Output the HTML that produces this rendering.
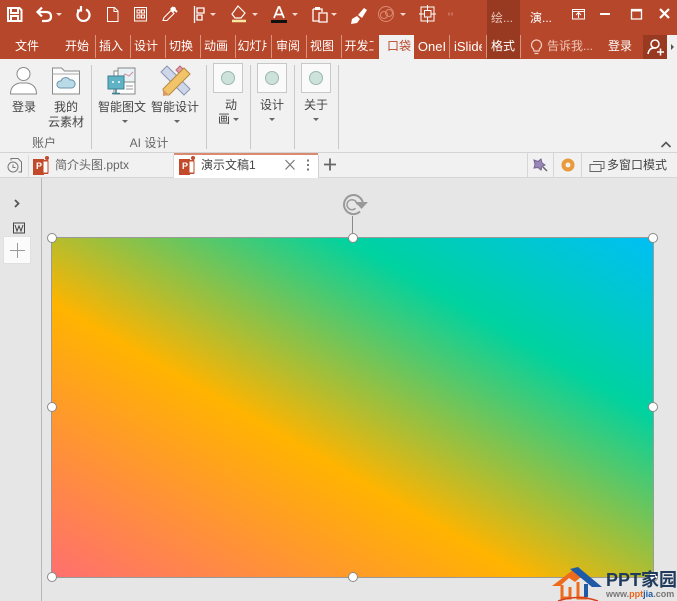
<!DOCTYPE html>
<html><head><meta charset="utf-8">
<style>
html,body{margin:0;padding:0;width:677px;height:601px;overflow:hidden;background:#e6e6e6}
body{position:relative;font-family:"Liberation Sans","Noto Sans CJK SC",sans-serif;font-size:12px;color:#444}
.a{position:absolute}
.t{position:absolute;white-space:nowrap;line-height:16px}
.c{transform:translateX(-50%);text-align:center}
.w{color:#fff}
.tab{position:absolute;top:38px;height:17px;line-height:17px;color:#fff;font-size:12px;white-space:nowrap;overflow:hidden;text-align:center;transform:translateX(-50%)}
.sep{position:absolute;top:35px;width:1px;height:23px;background:#d9937f}
.gs{position:absolute;top:65px;width:1px;height:84px;background:#c8c8c8}
.ph{position:absolute;top:63px;width:30px;height:30px;background:#fafafa;border:1px solid #c8c8c8;box-sizing:border-box}
.ph i{position:absolute;left:7px;top:7px;width:14px;height:14px;border-radius:50%;background:#cde2da;border:1px solid #9db8ae;box-sizing:border-box}
.ar{position:absolute;width:0;height:0;border-left:3px solid transparent;border-right:3px solid transparent;border-top:3px solid #666}
.wa{border-top-color:#f3d9d0}
.h{position:absolute;width:10px;height:10px;border-radius:50%;background:#fff;border:1.500px solid #8a8a8a;box-sizing:border-box;margin:-5px 0 0 -5px}
svg{position:absolute;overflow:visible}
</style></head><body>

<!-- title + tabs -->
<div class="a" style="left:0;top:0;width:677px;height:59px;background:#b7472a"></div>
<div class="a" style="left:487px;top:0;width:33px;height:59px;background:#983a22"></div>

<!-- QAT icons -->
<svg style="left:0;top:0" width="480" height="30" fill="none" stroke="#fff" stroke-width="2">
<path d="M8 8h11.500l2 2v11h-13.500z M11 8v5h7v-5 M11 21v-5h7v5"/>
<path d="M38 12h8q5 0 5 4.500t-5 4.500h-4 M42 7.500l-4.500 4.500 4.500 4.500" stroke-width="2.200"/>
<path d="M81 9.500a6 6 0 1 0 5 0 M81 6v4.500h-4" stroke-width="2.200"/>
<path d="M107.500 7.500h7l3.500 3.500v10.500h-10.500z M114 7.500v4h4" stroke-width="1"/>
<path d="M134.500 7.500h12v13.500h-12z M137 10h3v3h-3z M141.500 10h3v3h-3z M137 15h3v3h-3z M141.500 15h3v3h-3z" stroke-width="1"/>
<path d="M163 20.500l1 -3 7-7 3 3-7 7z" stroke-width="1.100"/><path d="M170 9l2-2 3 0 1 2-1 2-2 1z" fill="#fff" stroke="none"/><path d="M172 7l5 5" stroke-width="2"/>
<path d="M194.500 6v17 M197 8h7v5h-7z M197 15h5v5h-5z" stroke-width="1.300"/>
<path d="M238 6l7 7-4 5h-6l-3-4z" stroke-width="1.200"/><path d="M232 21h14" stroke="#f7e9a0" stroke-width="2.500"/>
<path d="M274 18l4.500-11h1l4.500 11 M276 14.500h6" stroke-width="1.700"/>
<path d="M271 21.500h16" stroke="#111" stroke-width="3"/>
<path d="M313 9h9v3 M313 9v12h6 M319 13h8v9h-8z" stroke-width="1.300"/><path d="M315 7h5v3h-5z" fill="#fff" stroke="none"/>
<path d="M352 19l5-3 3 3-3 4-6 1z" fill="#fff" stroke="none"/><path d="M358 15l6-7 3 2-5 8z" fill="#fff" stroke="none"/>
<g stroke="#d98a72" stroke-width="1"><circle cx="386" cy="14" r="7.500"/><circle cx="384" cy="15" r="3.500"/><circle cx="389" cy="13" r="3.500"/></g>
<g stroke-width="1"><path d="M421 7h13v14h-13z M424.500 10.500h6.500v6.500h-6.500z"/><path d="M427.500 5v5 M427.500 17v6 M419 14h5.500 M431 14h5"/></g>
<path d="M449 12.500v3 M452 12.500v3" stroke="#d07a62" stroke-width="1.500"/>
</svg>
<div class="ar wa" style="left:56px;top:13px"></div>
<div class="ar wa" style="left:210px;top:13px"></div>
<div class="ar wa" style="left:252px;top:13px"></div>
<div class="ar wa" style="left:292px;top:13px"></div>
<div class="ar wa" style="left:331px;top:13px"></div>
<div class="ar wa" style="left:400px;top:13px"></div>

<div class="t" style="left:491px;top:10px;color:#e8c4b8">绘...</div>
<div class="t w" style="left:530px;top:10px">演...</div>
<svg style="left:570px;top:0" width="107" height="30" fill="none" stroke="#fff">
<path d="M2.500 9.500h12v9.500h-12z M2.500 11.500h12 M8.500 18v-5 M6 15l2.500-2.500 2.500 2.500" stroke-width="1"/>
<path d="M30 14h10" stroke-width="2"/>
<path d="M61.500 9.500h10v9.500h-10z" stroke-width="1.300"/><path d="M61 10.500h11" stroke-width="2"/>
<path d="M90 9l9 9 M99 9l-9 9" stroke-width="2.200"/>
</svg>

<!-- tabs -->
<div class="tab" style="left:27px">文件</div>
<div class="tab" style="left:77px">开始</div>
<div class="sep" style="left:95px"></div>
<div class="tab" style="left:111px">插入</div>
<div class="sep" style="left:130px"></div>
<div class="tab" style="left:146px">设计</div>
<div class="sep" style="left:165px"></div>
<div class="tab" style="left:181px">切换</div>
<div class="sep" style="left:200px"></div>
<div class="tab" style="left:216px">动画</div>
<div class="sep" style="left:235px"></div>
<div class="tab" style="left:252px;width:29px">幻灯片</div>
<div class="sep" style="left:271px"></div>
<div class="tab" style="left:288px">审阅</div>
<div class="sep" style="left:306px"></div>
<div class="tab" style="left:322px">视图</div>
<div class="sep" style="left:341px"></div>
<div class="tab" style="left:359px;width:29px">开发工</div>
<div class="a" style="left:379px;top:35px;width:35px;height:24px;background:#f1f1f1"></div>
<div class="tab" style="left:399px;color:#b7472a">口袋</div>
<div class="tab" style="left:432px;width:29px;font-size:13px">OneI</div>
<div class="sep" style="left:449px"></div>
<div class="tab" style="left:468px;width:28px;font-size:13px">iSlide</div>
<div class="sep" style="left:486px"></div>
<div class="tab" style="left:503px">格式</div>
<div class="sep" style="left:520px"></div>
<svg style="left:530px;top:38px" width="14" height="18" fill="none" stroke="#f1cdbf" stroke-width="1.200"><path d="M3.500 11a5 5 0 1 1 6 0l-.5 2h-5z M4.500 15.500h4"/></svg>
<div class="tab" style="left:570px;color:#eec6b8">告诉我...</div>
<div class="tab" style="left:620px">登录</div>
<div class="a" style="left:643px;top:35px;width:24px;height:24px;background:#983a22"></div>
<svg style="left:646px;top:38px" width="20" height="20" fill="none" stroke="#fff" stroke-width="1.500"><circle cx="9" cy="6" r="4"/><path d="M2 16q1-6 6-6h2 M11 14h7 M14.500 10.500v7"/></svg>
<div class="a" style="left:667px;top:35px;width:10px;height:24px;background:#f1f1f1"></div>
<div class="a" style="left:671px;top:44px;width:0;height:0;border-top:3px solid transparent;border-bottom:3px solid transparent;border-left:3px solid #555"></div>

<!-- ribbon -->
<div class="a" style="left:0;top:59px;width:677px;height:94px;background:#f1f1f1;border-bottom:1px solid #d4d4d4;box-sizing:border-box"></div>
<div class="gs" style="left:91px"></div>
<div class="gs" style="left:206px"></div>
<div class="gs" style="left:250px"></div>
<div class="gs" style="left:294px"></div>
<div class="gs" style="left:338px"></div>

<svg style="left:0;top:59px" width="210" height="50" fill="none">
<circle cx="23.500" cy="15" r="6.500" stroke="#8a8a8a" fill="#fff"/>
<path d="M10.500 35q0-9 9-11h8q9 2 9 11z" stroke="#8a8a8a" fill="#fff"/>
<path d="M52.500 35v-26h9l3 3h15v23z" stroke="#8a8a8a" fill="#fcfcfc"/>
<path d="M52.500 15h27" stroke="#aaa"/>
<path d="M60 29a3.500 3.500 0 0 1 1-7 5 5 0 0 1 9-1 4 4 0 0 1 2 8z" fill="#b9dbe8" stroke="#6f93a8"/>
<path d="M114 12h21v23h-21z" fill="#fff" stroke="#888"/>
<path d="M118 9h17v14h-17z" fill="#e8f1f4" stroke="#888"/>
<path d="M121 20l4-5 4 2 4-4" stroke="#d58aa0"/><path d="M126 27h7M126 30h7" stroke="#999"/>
<path d="M108 17h16v13h-16z" fill="#5fb3c4" stroke="#3c7f90"/>
<path d="M116 30v4M112 34.500h8" stroke="#3c7f90" stroke-width="1.500"/>
<circle cx="113" cy="23" r="1" fill="#fff"/><circle cx="119" cy="23" r="1" fill="#fff"/>
<path d="M161 13l6-6 23 23-6 6z" fill="#cdd6ea" stroke="#8a97b0"/>
<path d="M180 7l6 6-4 4-6-6z" fill="#e99aa8" stroke="#b7697a"/>
<path d="M164 36l-1-6 21-21 6 6-21 21z" fill="#f2c46a" stroke="#b5873a"/>
<path d="M163 30l6 6-6 1z" fill="#d89a66"/>
</svg>

<div class="t c" style="left:24px;top:99px">登录</div>
<div class="t c" style="left:66px;top:99px">我的</div>
<div class="t c" style="left:66px;top:114px">云素材</div>
<div class="t c" style="left:122px;top:99px">智能图文</div>
<div class="t c" style="left:175px;top:99px">智能设计</div>
<div class="ar" style="left:122px;top:120px"></div>
<div class="ar" style="left:174px;top:120px"></div>
<div class="t c" style="left:44px;top:135px;color:#666">账户</div>
<div class="t c" style="left:149px;top:135px;color:#666">AI 设计</div>

<div class="ph" style="left:213px"><i></i></div>
<div class="ph" style="left:257px"><i></i></div>
<div class="ph" style="left:301px"><i></i></div>
<div class="t c" style="left:231px;top:97px">动</div>
<div class="t c" style="left:224px;top:111px">画</div>
<div class="ar" style="left:233px;top:118px"></div>
<div class="t c" style="left:272px;top:97px">设计</div>
<div class="ar" style="left:269px;top:118px"></div>
<div class="t c" style="left:316px;top:97px">关于</div>
<div class="ar" style="left:313px;top:118px"></div>
<svg style="left:660px;top:140px" width="12" height="9" fill="none" stroke="#555" stroke-width="1.600"><path d="M1.500 7l4.500-4.500 4.500 4.500"/></svg>

<!-- doc tabs -->
<div class="a" style="left:0;top:153px;width:677px;height:25px;background:#f1f1f1;border-bottom:1px solid #d6d6d6;box-sizing:border-box"></div>
<div class="a" style="left:174px;top:153px;width:144px;height:25px;background:#fff;border-top:2px solid #d98a6f;box-sizing:border-box"></div>
<div class="a" style="left:28px;top:155px;width:1px;height:22px;background:#dcdcdc"></div>
<div class="a" style="left:173px;top:155px;width:1px;height:22px;background:#dcdcdc"></div>
<div class="a" style="left:318px;top:155px;width:1px;height:22px;background:#d0d0d0"></div>
<div class="a" style="left:527px;top:153px;width:1px;height:25px;background:#d6d6d6"></div>
<div class="a" style="left:553px;top:153px;width:1px;height:25px;background:#d6d6d6"></div>
<div class="a" style="left:581px;top:153px;width:1px;height:25px;background:#d6d6d6"></div>
<svg style="left:0;top:153px" width="677" height="25" fill="none">
<circle cx="13" cy="14" r="5" stroke="#777"/><path d="M13 11.500v3h2.500" stroke="#777"/>
<path d="M11 7.500v-2h7l3.500 3.500v10h-3" stroke="#777"/>
<path d="M33 6h11v1h4v14h-4v1h-11z" fill="#c2492a"/><path d="M43 8h5v12h-5z" fill="#fff" stroke="#c2492a"/><circle cx="47" cy="5" r="2" fill="#c2492a"/>
<path d="M179 6h11v1h4v14h-4v1h-11z" fill="#c2492a"/><path d="M189 8h5v12h-5z" fill="#fff" stroke="#c2492a"/><circle cx="193" cy="5" r="2" fill="#c2492a"/>
<path d="M285.500 7l9 9.500 M294.500 7l-9 9.500" stroke="#777" stroke-width="1.200"/>
<path d="M308 6.500v2 M308 11v2 M308 15.500v2" stroke="#555" stroke-width="1.600"/>
<path d="M324 11.500h12 M330 5.500v12" stroke="#666" stroke-width="1.800"/>
<path d="M534 7l4 1.500 3-2.500 1 4 3 2-3 1.500-1 3.500-3-2.500-4 .5 1-3.500z" fill="#9a87b8" stroke="#75638f"/><path d="M543 14l4 4" stroke="#666" stroke-width="1.500"/>
<circle cx="568" cy="12" r="4.500" stroke="#e89a3c" stroke-width="4"/>
<path d="M593 8.500h11v7h-3 M590 11.500h11v7h-11z" stroke="#666"/>
</svg>
<div class="a" style="left:36px;top:161px;font-size:9px;line-height:11px;color:#fff;font-weight:bold">P</div>
<div class="a" style="left:182px;top:161px;font-size:9px;line-height:11px;color:#fff;font-weight:bold">P</div>
<div class="t" style="left:55px;top:157px;color:#666">简介头图.pptx</div>
<div class="t" style="left:201px;top:157px;color:#444">演示文稿1</div>
<div class="t" style="left:607px;top:157px;color:#444">多窗口模式</div>

<!-- left pane -->
<div class="a" style="left:41px;top:178px;width:1px;height:423px;background:#b8b8b8"></div>
<svg style="left:0;top:178px" width="41" height="80" fill="none">
<path d="M15 22l3.500 3.500-3.500 3.500" stroke="#555" stroke-width="1.800"/>
<path d="M13.500 45h11v10h-11z" stroke="#444" stroke-width="1"/><path d="M15 47l2 6 2-5 2 5 2-6" stroke="#444" stroke-width="1"/>
</svg>
<div class="a" style="left:3px;top:236px;width:28px;height:28px;background:#fbfbfb;border:1px solid #e0e0e0;box-sizing:border-box"></div>
<svg style="left:3px;top:236px" width="28" height="28" fill="none" stroke="#999"><path d="M7 14.500h15 M14.500 7v15"/></svg>

<!-- slide -->
<div class="a" style="left:52px;top:238px;width:601px;height:339px;background:linear-gradient(30deg,#ff6f6f 0%,#ffb400 40%,#00d2a0 74%,#00bff5 100%);box-shadow:0 0 0 1px #9a9a9a"></div>
<svg style="left:340px;top:192px" width="30" height="47" fill="none">
<path d="M12.500 24v22" stroke="#8a8a8a"/>
<path d="M23 12.500a9.500 9.500 0 1 0-3 7" stroke="#999" stroke-width="2"/>
<path d="M17 12.500a5 5 0 1 0-1.500 3.800" stroke="#999" stroke-width="1.500"/>
<path d="M15 10h13l-6.500 7z" fill="#999"/>
</svg>
<div class="h" style="left:52px;top:238px"></div>
<div class="h" style="left:352.500px;top:238px"></div>
<div class="h" style="left:653px;top:238px"></div>
<div class="h" style="left:52px;top:407px"></div>
<div class="h" style="left:653px;top:407px"></div>
<div class="h" style="left:52px;top:577px"></div>
<div class="h" style="left:352.500px;top:577px"></div>
<div class="h" style="left:653px;top:577px"></div>

<!-- watermark -->
<svg style="left:550px;top:564px" width="56" height="37" fill="none">
<path d="M2 22l21-16 8 7-6 5-6-4-9 8h-8z" fill="#ee6a1c"/>
<path d="M20 5l8-2 24 20h-10l-17-14z" fill="#1e5aa6"/>
<path d="M12 21v13h8v-11 M28 18v16h8v-14" stroke="#ee6a1c" stroke-width="3"/>
<path d="M36 20v13" stroke="#1e5aa6" stroke-width="4"/>
<path d="M8 37q20-7 40 0" stroke="#d8401c" stroke-width="1.500"/>
</svg>
<div class="t" style="left:606px;top:570px;font-size:18px;line-height:21px;font-weight:bold;color:#1f3a5c">PPT家园</div>
<div class="t" style="left:606px;top:589px;font-size:9px;line-height:11px;color:#777;font-weight:bold">www.<span style="color:#e8641c">ppt</span><span style="color:#1e5aa6">jia</span>.com</div>

</body></html>
